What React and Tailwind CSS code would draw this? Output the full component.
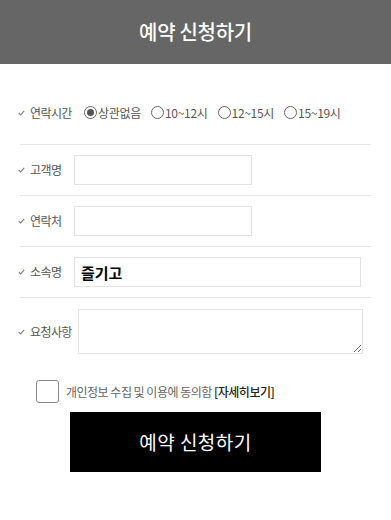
import React from "react";

const font = {
  fontFamily: '"Noto Sans CJK KR", "Noto Sans", sans-serif',
};

const Check = () => (
  <svg width="7" height="6" viewBox="0 0 7 6" className="mr-[5px] shrink-0">
    <path d="M0.8 3.2 L2.6 5 L6.2 0.9" fill="none" stroke="#777" strokeWidth="1.1" />
  </svg>
);

const Label = ({ children, className = "w-[56px]" }) => (
  <div className={`flex items-center shrink-0 ml-[-2px] text-[12px] tracking-[-0.6px] text-[#555] ${className}`}>
    <Check />
    <span>{children}</span>
  </div>
);

const Radio = ({ checked, label }) => (
  <label className="flex items-center mr-[10px]">
    <span className="w-[13px] h-[13px] rounded-full border border-[#666] flex items-center justify-center mr-[1px]">
      {checked && <span className="w-[7px] h-[7px] rounded-full bg-[#555]" />}
    </span>
    <span className="text-[12px] tracking-[-0.3px] text-[#555]">{label}</span>
  </label>
);

export default function App() {
  return (
    <div className="w-[391px] h-[520px] bg-white" style={font}>
      {/* Header */}
      <div className="h-[64px] bg-[#666666] flex items-center justify-center">
        <h1 className="text-white text-[20px] font-medium tracking-[-0.3px]">
          예약 신청하기
        </h1>
      </div>

      <div className="mx-[20px]">
        {/* 연락시간 */}
        <div className="flex items-center pt-[40px] pb-[23px] h-[81px] border-b border-[#e6e6e6]">
          <Label className="w-[66px]">연락시간</Label>
          <Radio checked label="상관없음" />
          <Radio label="10~12시" />
          <Radio label="12~15시" />
          <Radio label="15~19시" />
        </div>

        {/* 고객명 */}
        <div className="flex items-center h-[51px] border-b border-[#e6e6e6]">
          <Label>고객명</Label>
          <input className="w-[178px] h-[30px] border border-[#e3e3e3] outline-none" />
        </div>

        {/* 연락처 */}
        <div className="flex items-center h-[51px] border-b border-[#e6e6e6]">
          <Label>연락처</Label>
          <input className="w-[178px] h-[30px] border border-[#e3e3e3] outline-none" />
        </div>

        {/* 소속명 */}
        <div className="flex items-center h-[51px] border-b border-[#e6e6e6]">
          <Label>소속명</Label>
          <input
            defaultValue="즐기고"
            className="w-[287px] h-[30px] border border-[#e3e3e3] outline-none px-[6px] text-[15px] font-bold text-black"
            style={font}
          />
        </div>

        {/* 요청사항 */}
        <div className="flex items-center pt-[11px]">
          <Label className="w-[60px]">요청사항</Label>
          <textarea className="w-[285px] h-[45px] border border-[#e3e3e3] outline-none resize-y" />
        </div>
      </div>

      {/* 동의 */}
      <div className="flex items-center mt-[26px] pl-[36px]">
        <span className="w-[23px] h-[23px] rounded-[3px] border border-[#888] bg-white mr-[7px]" />
        <span className="text-[12px] tracking-[-0.5px] text-[#666]">
          개인정보 수집 및 이용에 동의함{" "}
          <span className="text-[#222] font-medium">[자세히보기]</span>
        </span>
      </div>

      {/* Submit */}
      <div className="pl-[70px] mt-[9px]">
        <button className="w-[251px] h-[60px] bg-black text-white text-[19px] tracking-[0.5px]" style={font}>
          예약 신청하기
        </button>
      </div>
    </div>
  );
}
